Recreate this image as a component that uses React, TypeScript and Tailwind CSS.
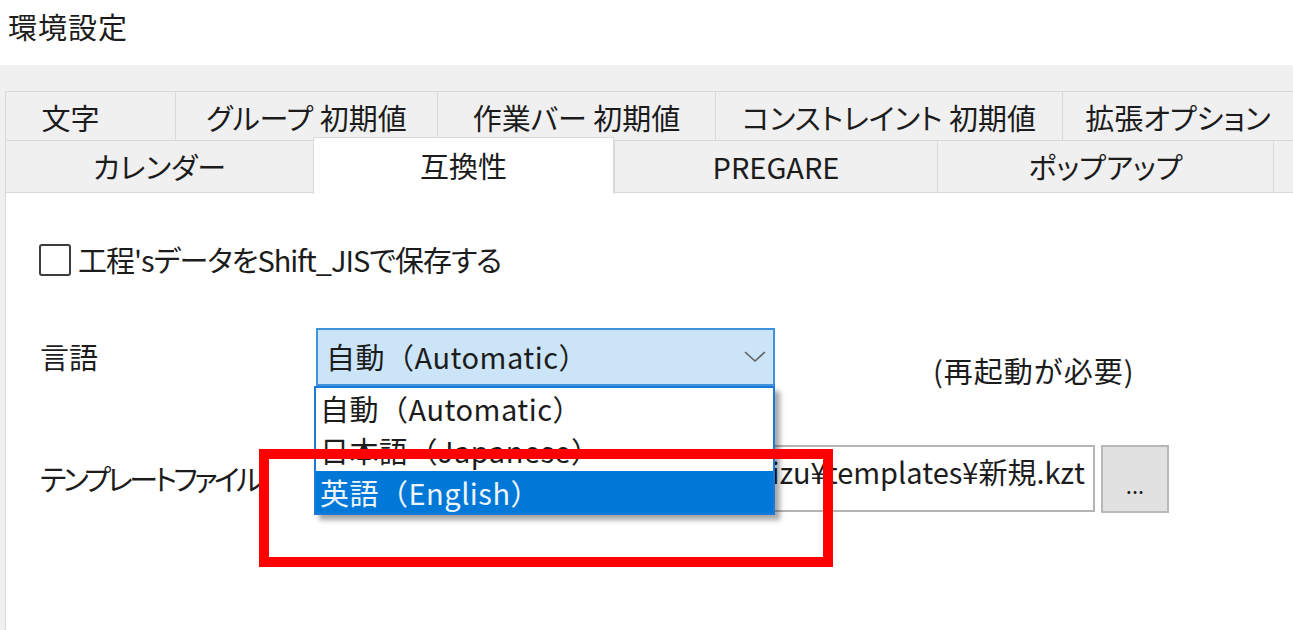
import React from 'react';

const row1Tabs = [
  { label: '文字', w: 'w-[170px] pr-[40px]' },
  { label: 'グループ 初期値', w: 'w-[262px]' },
  { label: '作業バー 初期値', w: 'w-[278px]' },
  { label: 'コンストレイント 初期値', w: 'w-[347px]' },
  { label: '拡張オプション', w: 'flex-1' },
];

const row2Tabs = [
  { label: 'カレンダー', w: 'w-[308px]' },
  { label: '互換性', w: 'w-[301px]', active: true },
  { label: 'PREGARE', w: 'w-[323px]' },
  { label: 'ポップアップ', w: 'w-[336px]' },
  { label: '', w: 'flex-1' },
];

const options = ['自動（Automatic）', '日本語（Japanese）', '英語（English）'];

const App: React.FC = () => {
  return (
    <div className="relative w-[1293px] h-[630px] overflow-hidden bg-white text-[#1c1c1c] font-['Noto_Sans_CJK_JP',sans-serif] text-[29px]">
      {/* Title */}
      <div className="h-[65px] pl-[8px] pt-[6px] leading-[40px] tracking-[1px]">環境設定</div>

      {/* Tab strip + panel */}
      <div className="bg-[#f0f0f0] pl-[5px] pt-[26px] flex flex-col h-[565px]">
        <div className="flex h-[49px] [font-feature-settings:'palt']">
          {row1Tabs.map((t) => (
            <div
              key={t.label}
              className={`${t.w} flex items-center justify-center border-l border-t border-[#d9d9d9] pt-[3px]`}
            >
              {t.label}
            </div>
          ))}
        </div>
        <div className="flex h-[53px] [font-feature-settings:'palt']">
          {row2Tabs.map((t, i) =>
            t.active ? (
              <div
                key={i}
                className={`${t.w} relative z-10 -mt-[3px] h-[57px] flex items-center justify-center bg-white border-x border-t border-[#d9d9d9]`}
              >
                {t.label}
              </div>
            ) : (
              <div
                key={i}
                className={`${t.w} flex items-center justify-center border-l border-t border-b border-[#d9d9d9]`}
              >
                {t.label}
              </div>
            )
          )}
        </div>

        {/* Panel */}
        <div className="flex-1 bg-white border-l border-[#d9d9d9] pl-[33px] pt-[50px]">
          {/* Checkbox */}
          <div className="flex items-center h-[34px]">
            <div className="w-[32px] h-[32px] border-2 border-[#3c3c3c] rounded-[3px] bg-white" />
            <span className="ml-[7px] tracking-[-1px] [font-feature-settings:'palt']">
              工程'sデータをShift_JISで保存する
            </span>
          </div>

          {/* Language */}
          <div className="flex items-center h-[58px] mt-[51px]">
            <div className="w-[277px] pl-[1px]">言語</div>
            <div className="relative w-[459px] h-[58px]">
              <div className="h-full flex items-center justify-between bg-[#cce4f7] border-2 border-[#3f93dc] pl-[8px] pr-[6px]">
                <span className="tracking-[0.5px]">自動（Automatic）</span>
                <svg width="24" height="14" viewBox="0 0 24 14" fill="none">
                  <path d="M2 2 L12 11 L22 2" stroke="#5f5f5f" strokeWidth="1.6" />
                </svg>
              </div>
              {/* Open list */}
              <div className="absolute left-[-2px] top-[58px] z-20 w-[461px] h-[129px] bg-white border-2 border-[#1c7ad6] shadow-[5px_5px_5px_rgba(0,0,0,0.35)] flex flex-col">
                {options.map((o, i) => (
                  <div
                    key={o}
                    className={`flex-1 flex items-center pl-[4px] leading-none tracking-[0.5px] ${
                      i === 2 ? 'bg-[#0078d7] text-[#eef5fc]' : ''
                    }`}
                  >
                    {o}
                  </div>
                ))}
              </div>
            </div>
            <span className="ml-[158px] mt-[28px] tracking-[1px]">(再起動が必要)</span>
          </div>

          {/* Template file */}
          <div className="flex items-center h-[69px] mt-[58px]">
            <div className="w-[277px] pl-[1px] tracking-[-3.5px] [font-feature-settings:'palt']">
              テンプレートファイル
            </div>
            <div className="w-[779px] h-[67px] border-2 border-[#b4b4b4] flex items-center justify-end overflow-hidden pr-[8px] pb-[14px] whitespace-nowrap">
              C:¥Users¥Public¥Kouteizu¥templates¥新規.kzt
            </div>
            <div className="ml-[6px] w-[68px] h-[68px] bg-[#e1e1e1] border-2 border-[#b8b8b8] flex items-end justify-center pb-[16px] text-[22px] leading-none">
              ...
            </div>
          </div>
        </div>
      </div>

      {/* Red annotation box */}
      <div className="absolute left-[259px] top-[449px] w-[574px] h-[118px] border-[10px] border-[#ff0000] z-30" />
    </div>
  );
};

export default App;
